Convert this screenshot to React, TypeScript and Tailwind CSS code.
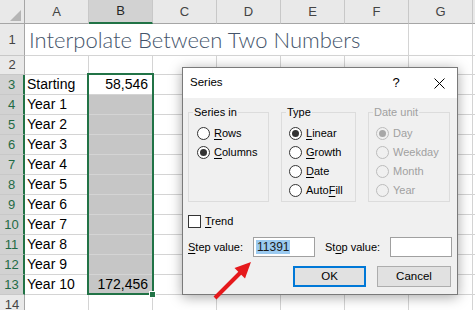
import React from 'react';

const cols = ['A', 'B', 'C', 'D', 'E', 'F', 'G'];

const rows: { n: number; a?: string; b?: string }[] = [
  { n: 3, a: 'Starting', b: '58,546' },
  { n: 4, a: 'Year 1' },
  { n: 5, a: 'Year 2' },
  { n: 6, a: 'Year 3' },
  { n: 7, a: 'Year 4' },
  { n: 8, a: 'Year 5' },
  { n: 9, a: 'Year 6' },
  { n: 10, a: 'Year 7' },
  { n: 11, a: 'Year 8' },
  { n: 12, a: 'Year 9' },
  { n: 13, a: 'Year 10', b: '172,456' },
  { n: 14 },
];

function Radio({ checked, disabled }: { checked?: boolean; disabled?: boolean }) {
  return (
    <span
      className={
        'flex h-[13px] w-[13px] shrink-0 items-center justify-center rounded-full border ' +
        (disabled ? 'border-[#bcbcbc] bg-[#f0f0f0]' : 'border-[#333333] bg-white')
      }
    >
      {checked && (
        <span className={'h-[7px] w-[7px] rounded-full ' + (disabled ? 'bg-[#a8a8a8]' : 'bg-[#333333]')} />
      )}
    </span>
  );
}

function Option({
  label,
  keyIdx,
  checked,
  disabled,
}: {
  label: string;
  keyIdx?: number;
  checked?: boolean;
  disabled?: boolean;
}) {
  return (
    <div className="flex h-[19px] items-center gap-[4px]">
      <Radio checked={checked} disabled={disabled} />
      <span className={disabled ? 'text-[#a0a0a0]' : 'text-black'}>
        {keyIdx === undefined ? (
          label
        ) : (
          <>
            {label.slice(0, keyIdx)}
            <span className="underline underline-offset-2">{label[keyIdx]}</span>
            {label.slice(keyIdx + 1)}
          </>
        )}
      </span>
    </div>
  );
}

function GroupBox({
  title,
  width,
  padLeft,
  disabled,
  children,
}: {
  title: string;
  width: string;
  padLeft: string;
  disabled?: boolean;
  children: React.ReactNode;
}) {
  return (
    <div className={'relative h-[90px] border border-[#dcdcdc] pt-[11px] ' + width + ' ' + padLeft}>
      <span
        className={
          'absolute -top-[8px] left-[4px] bg-[#f0f0f0] px-[1px] leading-[14px] ' +
          (disabled ? 'text-[#a0a0a0]' : 'text-black')
        }
      >
        {title}
      </span>
      {children}
    </div>
  );
}

function SeriesDialog() {
  return (
    <div className="absolute left-[182px] top-[67px] flex h-[228px] w-[276px] flex-col border border-[#7a7a7a] bg-[#f0f0f0] font-['Liberation_Sans',sans-serif] text-[11px] shadow-[0_2px_12px_rgba(0,0,0,0.35)]">
      {/* title bar */}
      <div className="flex h-[30px] shrink-0 items-center bg-white pl-[7px]">
        <span className="text-[11.5px] text-black">Series</span>
        <span className="ml-[170px] text-[13px] text-black">?</span>
        <svg className="ml-[34px]" width="11" height="11" viewBox="0 0 11 11">
          <path d="M0.5 0.5 L10.5 10.5 M10.5 0.5 L0.5 10.5" stroke="#000" strokeWidth="1" />
        </svg>
      </div>

      <div className="flex flex-col pl-[5px] pt-[14px]">
        <div className="flex gap-[12px]">
          <GroupBox title="Series in" width="w-[81px]" padLeft="pl-[8px]">
            <Option label="Rows" keyIdx={0} />
            <Option label="Columns" keyIdx={0} checked />
          </GroupBox>
          <GroupBox title="Type" width="w-[75px]" padLeft="pl-[7px]">
            <Option label="Linear" keyIdx={0} checked />
            <Option label="Growth" keyIdx={0} />
            <Option label="Date" keyIdx={0} />
            <Option label="AutoFill" keyIdx={4} />
          </GroupBox>
          <GroupBox title="Date unit" width="w-[82px]" padLeft="pl-[7px]" disabled>
            <Option label="Day" checked disabled />
            <Option label="Weekday" disabled />
            <Option label="Month" disabled />
            <Option label="Year" disabled />
          </GroupBox>
        </div>

        <div className="mt-[13px] flex h-[13px] items-center gap-[4px]">
          <span className="h-[13px] w-[13px] border border-[#333333] bg-white" />
          <span>
            <span className="underline underline-offset-2">T</span>rend
          </span>
        </div>

        <div className="mt-[9px] flex h-[20px] items-center">
          <span className="w-[65px]">
            <span className="underline underline-offset-2">S</span>tep value:
          </span>
          <div className="flex h-[20px] w-[62px] items-center border border-[#a0a0a0] bg-white pl-[2px]">
            <span className="bg-[#9bcaf0] px-[1px] text-[12px] leading-[14px] text-[#1a1a1a]">11391</span>
          </div>
          <span className="ml-[10px] w-[65px]">
            St<span className="underline underline-offset-2">o</span>p value:
          </span>
          <div className="h-[20px] w-[62px] border border-[#a0a0a0] bg-white" />
        </div>

        <div className="mt-[9px] flex justify-end gap-[11px] pr-[6px]">
          <button className="flex h-[21px] w-[73px] items-center justify-center border-2 border-[#0078d7] bg-[#e1e1e1] text-[11.5px] text-black">
            OK
          </button>
          <button className="flex h-[21px] w-[74px] items-center justify-center border border-[#adadad] bg-[#e1e1e1] text-[11.5px] text-black">
            Cancel
          </button>
        </div>
      </div>
    </div>
  );
}

export default function App() {
  return (
    <div className="relative h-[310px] w-[475px] overflow-hidden bg-white font-['Liberation_Sans',sans-serif] text-[14px] text-black">
      {/* ── COLUMN HEADERS ── */}
      <div className="flex h-[24px]">
        <div className="relative h-full w-[25px] shrink-0 border-b border-r border-[#a6a6a6] bg-[#e9e9e9]">
          <svg className="absolute left-[10px] top-[10px]" width="11" height="11" viewBox="0 0 11 11">
            <polygon points="11,0 11,11 0,11" fill="#b5b5b5" />
          </svg>
        </div>
        {cols.map((c) => (
          <div
            key={c}
            className={
              'flex h-full w-[64px] shrink-0 items-center justify-center border-r border-r-[#c8c8c8] text-[13px] ' +
              (c === 'B'
                ? 'border-b-2 border-b-[#217346] bg-[#d2d2d2] text-[#262626]'
                : 'border-b border-b-[#a6a6a6] bg-[#e9e9e9] text-[#444444]')
            }
          >
            {c}
          </div>
        ))}
        <div className="h-full flex-1 border-b border-[#a6a6a6] bg-[#e9e9e9]" />
      </div>

      {/* ── ROW 1 ── */}
      <div className="flex h-[32px]">
        <div className="flex h-full w-[25px] shrink-0 items-center justify-center border-b border-r border-b-[#c8c8c8] border-r-[#a6a6a6] bg-[#e9e9e9] text-[13px] text-[#444444]">
          1
        </div>
        <div className="flex h-full w-[384px] shrink-0 items-center border-b border-r border-[#d4d4d4] pl-[4px] font-['Lato',sans-serif] text-[22px] font-light leading-none text-[#44546a]">
          Interpolate Between Two Numbers
        </div>
        <div className="h-full w-[64px] shrink-0 border-b border-r border-[#d4d4d4]" />
        <div className="h-full flex-1 border-b border-[#d4d4d4]" />
      </div>

      {/* ── ROW 2 ── */}
      <div className="flex h-[19px]">
        <div className="flex h-full w-[25px] shrink-0 items-center justify-center border-b border-r border-b-[#c8c8c8] border-r-[#a6a6a6] bg-[#e9e9e9] text-[13px] text-[#444444]">
          2
        </div>
        {cols.map((c) => (
          <div key={c} className="h-full w-[64px] shrink-0 border-b border-r border-[#d4d4d4]" />
        ))}
        <div className="h-full flex-1 border-b border-[#d4d4d4]" />
      </div>

      {/* ── DATA ROWS ── */}
      {rows.map((r) => {
        const sel = r.n <= 13;
        return (
          <div key={r.n} className="flex h-[20px]">
            <div
              className={
                'flex h-full w-[25px] shrink-0 items-center justify-center border-b border-b-[#c8c8c8] text-[13px] ' +
                (sel
                  ? 'border-r-2 border-r-[#217346] bg-[#d2d2d2] text-[#1f6b45]'
                  : 'border-r border-r-[#a6a6a6] bg-[#e9e9e9] text-[#444444]')
              }
            >
              {r.n}
            </div>
            <div className="flex h-full w-[64px] shrink-0 items-center border-b border-r border-[#d4d4d4] pl-[2px]">
              {r.a}
            </div>
            <div
              className={
                'flex h-full w-[64px] shrink-0 items-center justify-end border-b border-r border-[#d4d4d4] pr-[4px] ' +
                (sel && r.n > 3 ? 'bg-[#c6c6c6]' : '')
              }
            >
              {r.b}
            </div>
            {cols.slice(2).map((c) => (
              <div key={c} className="h-full w-[64px] shrink-0 border-b border-r border-[#d4d4d4]" />
            ))}
            <div className="h-full flex-1 border-b border-[#d4d4d4]" />
          </div>
        );
      })}

      {/* ── SELECTION ── */}
      <div className="pointer-events-none absolute left-[87px] top-[73px] h-[222px] w-[67px] border-2 border-[#217346]" />
      <div className="absolute left-[149px] top-[291px] h-[7px] w-[7px] border border-white bg-[#217346]" />

      <SeriesDialog />

      {/* ── ARROW ── */}
      <svg className="absolute left-[205px] top-[255px]" width="55" height="50" viewBox="0 0 55 50">
        <line x1="10" y1="43" x2="37" y2="16" stroke="#e5191c" strokeWidth="4" />
        <polygon points="46,7 29.5,13 40,23.5" fill="#e5191c" />
      </svg>
    </div>
  );
}
